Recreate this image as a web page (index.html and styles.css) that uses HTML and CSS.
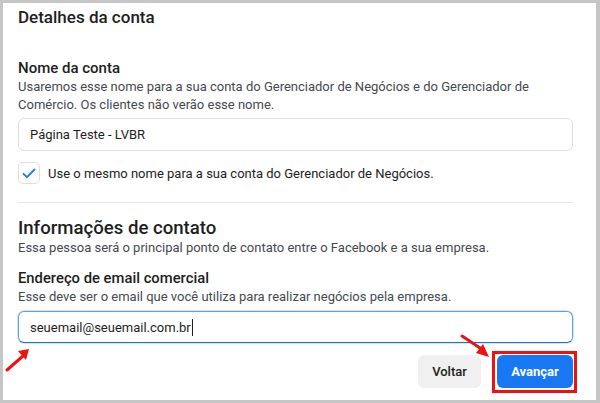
FILE: index.html
```html
<!DOCTYPE html>
<html lang="pt-BR">
<head>
<meta charset="utf-8">
<link rel="stylesheet" href="styles.css">
</head>
<body>
<div class="panel">
  <h1 class="title">Detalhes da conta</h1>
  <section class="group">
    <h2 class="label">Nome da conta</h2>
    <p class="desc">Usaremos esse nome para a sua conta do Gerenciador de Negócios e do Gerenciador de Comércio. Os clientes não verão esse nome.</p>
    <div class="input">Página Teste - LVBR</div>
    <div class="check-row">
      <span class="checkbox">
        <svg width="14" height="11" viewBox="0 0 14 11"><path d="M1.5 5.8 L5 9.2 L12.5 1.5" fill="none" stroke="#1877f2" stroke-width="1.8" stroke-linecap="round" stroke-linejoin="round"/></svg>
      </span>
      <span class="check-label">Use o mesmo nome para a sua conta do Gerenciador de Negócios.</span>
    </div>
  </section>
  <hr class="divider">
  <section class="group">
    <h2 class="section-title">Informações de contato</h2>
    <p class="desc">Essa pessoa será o principal ponto de contato entre o Facebook e a sua empresa.</p>
    <h2 class="label label-gap">Endereço de email comercial</h2>
    <p class="desc">Esse deve ser o email que você utiliza para realizar negócios pela empresa.</p>
    <div class="input input-focus">seuemail@seuemail.com.br<span class="caret"></span></div>
  </section>
  <div class="actions">
    <button class="btn btn-secondary">Voltar</button>
    <button class="btn btn-primary">Avançar</button>
  </div>
  <span class="highlight"></span>
  <svg class="arrow arrow-left" width="30" height="30" viewBox="0 0 30 30"><path d="M3 26 L19 12" stroke="#ee1111" stroke-width="3" stroke-linecap="round"/><path d="M14 7 L25 5 L22 16 Z" fill="#ee1111"/></svg>
  <svg class="arrow arrow-right" width="34" height="28" viewBox="0 0 34 28"><path d="M3 3 L21 15" stroke="#ee1111" stroke-width="3" stroke-linecap="round"/><path d="M17 20 L30 24 L24 11 Z" fill="#ee1111"/></svg>
</div>
</body>
</html>
```
FILE: styles.css
```css
* { box-sizing: border-box; }
html, body { margin: 0; padding: 0; }
body {
  width: 600px;
  height: 403px;
  background: #c6c6c6;
  padding: 3px 4px 3px 3px;
  font-family: Roboto, "Liberation Sans", Arial, sans-serif;
  color: #1c1e21;
  overflow: hidden;
}
.panel {
  position: relative;
  background: #fff;
  height: 397px;
  padding: 4px 23px 0 15px;
  display: flex;
  flex-direction: column;
}
.title {
  margin: 0;
  font-size: 17px;
  line-height: 20px;
  font-weight: 500;
  color: #1c1e21;
}
.group { display: flex; flex-direction: column; }
.label {
  margin: 31px 0 0;
  font-size: 15px;
  line-height: 20px;
  font-weight: 500;
  color: #1c1e21;
}
.label-gap { margin-top: 11px; font-size: 14.8px; }
.desc {
  margin: 0;
  font-size: 13px;
  line-height: 18px;
  color: #444950;
}
.input {
  margin-top: 4px;
  height: 33px;
  border: 1px solid #dddfe2;
  border-radius: 6px;
  padding: 0 11px;
  display: flex;
  align-items: center;
  font-size: 13px;
  color: #1c1e21;
}
.input-focus {
  margin-top: 5px;
  height: 32px;
  border-color: #5d9df5;
  border-bottom-color: #1a6fe0;
  box-shadow: 0 0 0 0.5px #a9cbfa;
}
.caret {
  display: inline-block;
  width: 1px;
  height: 17px;
  background: #1c1e21;
  margin-left: 1px;
}
.check-row {
  margin-top: 11px;
  display: flex;
  align-items: center;
  gap: 8px;
}
.checkbox {
  width: 22px;
  height: 22px;
  border: 1px solid #dddfe2;
  border-radius: 5px;
  display: flex;
  align-items: center;
  justify-content: center;
}
.check-label { font-size: 13px; color: #1c1e21; }
.divider {
  margin: 18px 0 0;
  border: 0;
  border-top: 1px solid #e4e6eb;
  height: 0;
}
.section-title {
  margin: 14px 0 0;
  font-size: 18.6px;
  line-height: 22px;
  font-weight: 500;
  color: #1c1e21;
}
.actions {
  margin-top: 12px;
  display: flex;
  justify-content: flex-end;
  gap: 16px;
}
.btn {
  height: 33px;
  border: 0;
  border-radius: 6px;
  font-family: inherit;
  font-size: 13px;
  font-weight: 500;
  padding: 0;
}
.btn-secondary { background: #f0f0f0; color: #1c1e21; width: 63px; }
.btn-primary { background: #1877f2; color: #fff; font-weight: 700; width: 76px; }
.highlight {
  position: absolute;
  left: 489px;
  top: 348px;
  width: 85px;
  height: 42px;
  border: 3px solid #ee1111;
}
.arrow { position: absolute; }
.arrow-left { left: 1px; top: 341px; }
.arrow-right { left: 456px; top: 330px; }
```
